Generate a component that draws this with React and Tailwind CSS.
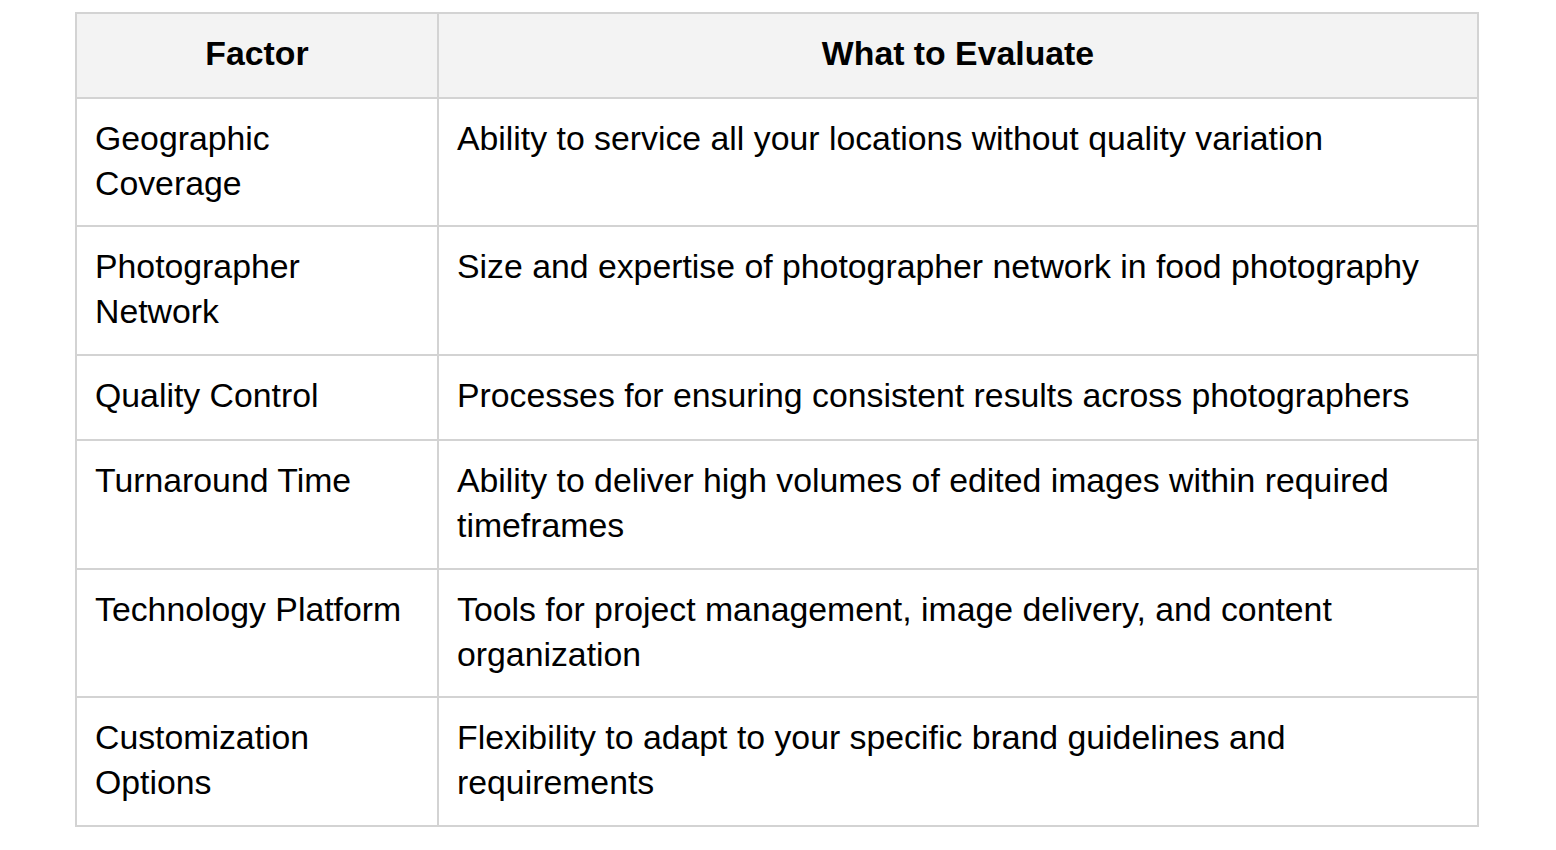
export default function App() {
  const rows = [
    { h: "h-[128px]", f: ["Geographic", "Coverage"], w: ["Ability to service all your locations without quality variation"] },
    { h: "h-[129px]", f: ["Photographer", "Network"], w: ["Size and expertise of photographer network in food photography"] },
    { h: "h-[85px]", f: ["Quality Control"], w: ["Processes for ensuring consistent results across photographers"] },
    { h: "h-[129px]", f: ["Turnaround Time"], w: ["Ability to deliver high volumes of edited images within required", "timeframes"] },
    { h: "h-[128px]", f: ["Technology Platform"], w: ["Tools for project management, image delivery, and content", "organization"] },
    { h: "h-[129px]", f: ["Customization", "Options"], w: ["Flexibility to adapt to your specific brand guidelines and", "requirements"] },
  ];
  return (
    <div className="min-h-[850px] w-[1556px] bg-white pt-[12px] pl-[75px] text-black" style={{ fontFamily: '"Liberation Sans", Arial, sans-serif' }}>
      <div className="w-[1404px] border-2 border-[#d3d3d3] text-[33.8px] leading-[45px]">
        <div className="flex h-[83px] bg-[#f3f3f3] font-bold">
          <div className="w-[360px] shrink-0 pt-[17px] text-center">Factor</div>
          <div className="flex-1 border-l-2 border-[#d3d3d3] pt-[17px] text-center">What to Evaluate</div>
        </div>
        {rows.map((r, i) => (
          <div key={i} className={`flex border-t-2 border-[#d3d3d3] ${r.h}`}>
            <div className="w-[360px] shrink-0 pl-[18px] pt-[17px]">
              {r.f.map((t, j) => (
                <div key={j} className="whitespace-nowrap">{t}</div>
              ))}
            </div>
            <div className="flex-1 border-l-2 border-[#d3d3d3] pl-[18px] pt-[17px]">
              {r.w.map((t, j) => (
                <div key={j} className="whitespace-nowrap">{t}</div>
              ))}
            </div>
          </div>
        ))}
      </div>
    </div>
  );
}
